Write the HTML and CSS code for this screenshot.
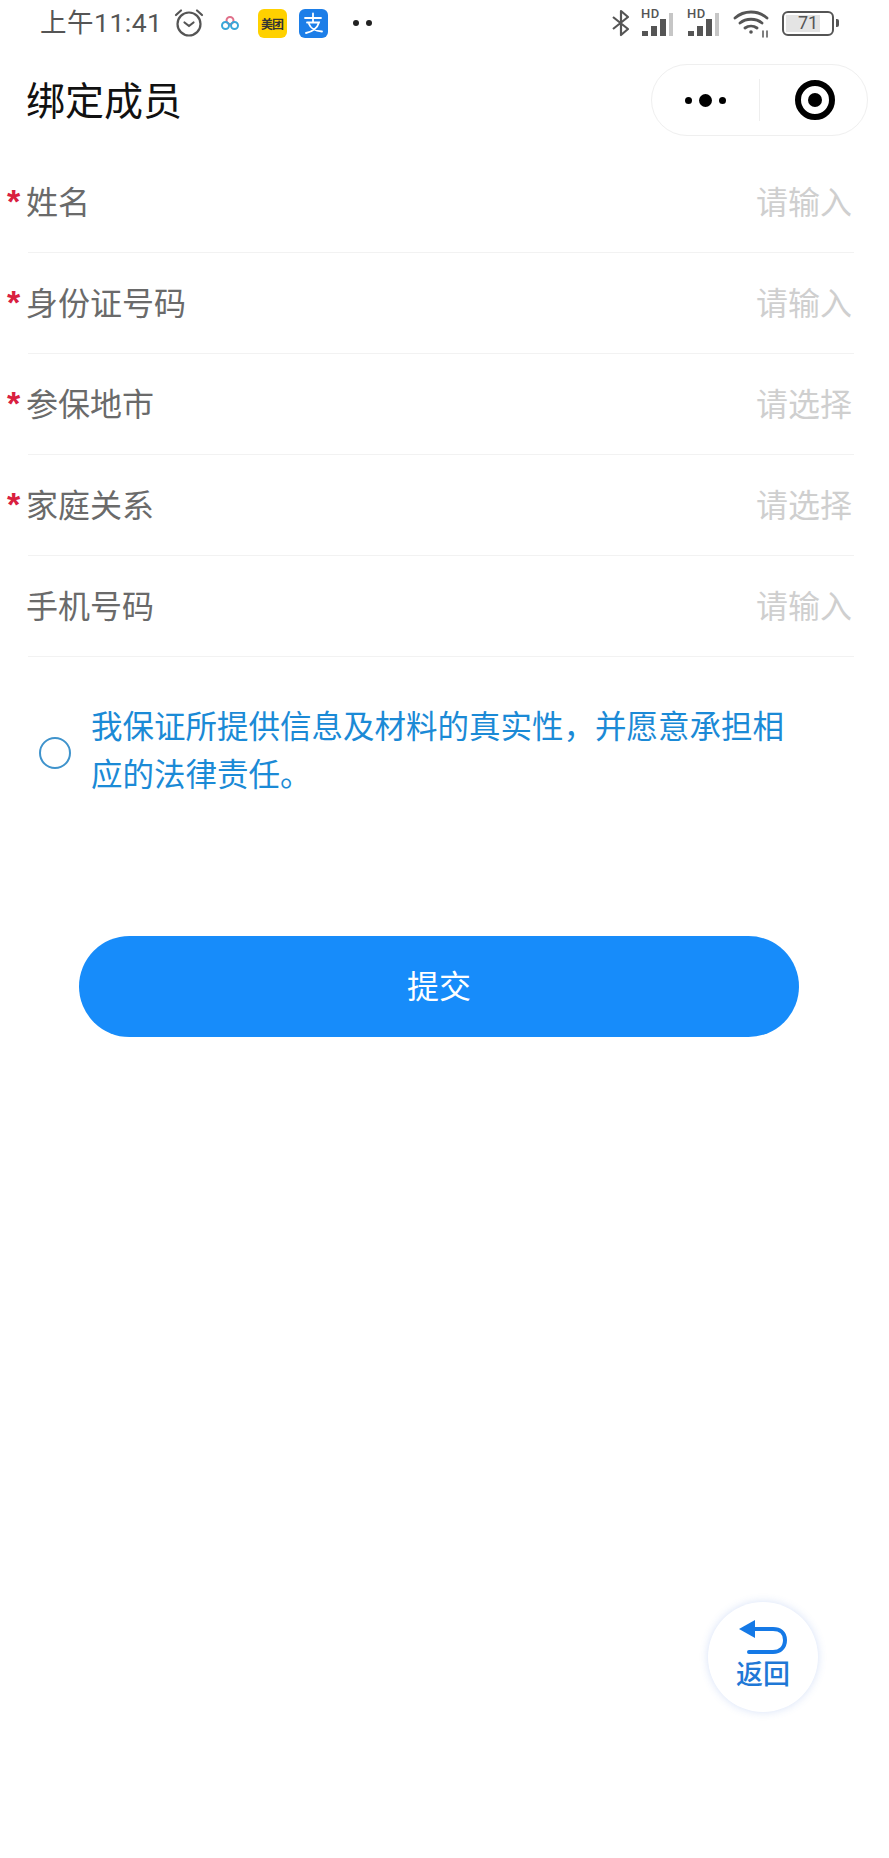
FILE: index.html
```html
<!DOCTYPE html>
<html lang="zh-CN">
<head>
<meta charset="utf-8">
<title>绑定成员</title>
<link rel="stylesheet" href="styles.css">
</head>
<body>
<div class="page">
  <div class="statusbar">
    <div class="status-left">
      <span class="time">上午11:41</span>
      <svg class="ic-alarm" width="30" height="30" viewBox="0 0 30 30" fill="none" stroke="#555" stroke-width="2.2" stroke-linecap="round" stroke-linejoin="round"><circle cx="15" cy="16" r="11.500"/><path d="M10.500 14.500l4.500 3.500 4.500-3.500"/><path d="M2 7l5-4.500M28 7l-5-4.500"/></svg>
      <svg class="ic-cloud" width="20" height="16" viewBox="0 0 20 16" fill="none" stroke-width="2"><circle cx="10" cy="5.500" r="3.500" stroke="#e0708a"/><circle cx="5.500" cy="10.500" r="3.500" stroke="#3aa6d8"/><circle cx="14.500" cy="10.500" r="3.500" stroke="#3aa6d8"/></svg>
      <span class="ic-meituan">美团</span>
      <svg class="ic-alipay" width="29" height="29" viewBox="0 0 29 29"><rect width="29" height="29" rx="6" fill="#1c7ee8"/><path d="M6 9h16M14 4.500v8M8 13.500h12c-1.500 5-6 9-13 10.500M10 15c1.500 4 6 7 13 7.500" fill="none" stroke="#fff" stroke-width="1.800" stroke-linecap="round"/></svg>
      <span class="dots2"><i></i><i></i></span>
    </div>
    <div class="status-right">
      <svg width="20" height="30" viewBox="0 0 20 30" fill="none" stroke="#555" stroke-width="2.200" stroke-linejoin="round"><path d="M2 9l15 12-7 6V3l7 6L2 21"/></svg>
      <span class="signal"><b class="hd">HD</b><i class="b1"></i><i class="b2"></i><i class="b3"></i><i class="b4 off"></i></span>
      <span class="signal"><b class="hd">HD</b><i class="b1"></i><i class="b2"></i><i class="b3"></i><i class="b4 off"></i></span>
      <svg class="ic-wifi" width="38" height="30" viewBox="0 0 38 30" fill="none" stroke="#555" stroke-width="2.800" stroke-linecap="round"><path d="M2 10c9-8 23-8 32 0M7 15c6-5 16-5 22 0M12 20c3.500-2.500 8.500-2.500 12 0"/><circle cx="18" cy="24" r="1.800" fill="#555" stroke="none"/><path d="M30 23v6M34 23v6" stroke-width="1.500"/></svg>
      <span class="battery"><span class="battery-body"><span class="battery-fill"></span><span class="battery-num">71</span></span><i class="battery-cap"></i></span>
    </div>
  </div>

  <div class="navbar">
    <h1 class="nav-title">绑定成员</h1>
    <div class="capsule">
      <span class="capsule-more"><i></i><i class="big"></i><i></i></span>
      <span class="capsule-sep"></span>
      <span class="capsule-target"><i></i></span>
    </div>
  </div>

  <form class="form">
    <div class="row"><span class="label req">姓名</span><span class="ph">请输入</span></div>
    <div class="row"><span class="label req">身份证号码</span><span class="ph">请输入</span></div>
    <div class="row"><span class="label req">参保地市</span><span class="ph">请选择</span></div>
    <div class="row"><span class="label req">家庭关系</span><span class="ph">请选择</span></div>
    <div class="row"><span class="label">手机号码</span><span class="ph">请输入</span></div>
  </form>

  <div class="agree">
    <span class="radio"></span>
    <p class="agree-text">我保证所提供信息及材料的真实性，并愿意承担相应的法律责任。</p>
  </div>

  <button class="submit" type="button">提交</button>

  <div class="back">
    <svg width="48" height="36" viewBox="0 0 48 36" fill="none"><path d="M0 10L16 1v18z" fill="#1579e6"/><path d="M14 10h20c7 0 12 3.500 12 11s-5 12-12 12H10" stroke="#1579e6" stroke-width="4" stroke-linecap="round"/></svg>
    <span class="back-text">返回</span>
  </div>
</div>
</body>
</html>
```
FILE: styles.css
```css
* { box-sizing: border-box; }
html, body { margin: 0; padding: 0; background: #fff; }
body { font-family: "Noto Sans CJK SC", "Noto Sans", sans-serif; }
.page { position: relative; width: 889px; height: 1858px; overflow: hidden; background: #fff; }

.statusbar { height: 46px; display: flex; justify-content: space-between; align-items: center; padding: 0 50px 0 40px; }
.status-left, .status-right { display: flex; align-items: center; }
.time { font-family: "Roboto", "Noto Sans CJK SC", sans-serif; font-size: 26.500px; color: #555; line-height: 46px; letter-spacing: 0.5px; }
.ic-alarm { margin-left: 11px; }
.ic-cloud { margin-left: 16px; }
.ic-meituan { margin-left: 18px; width: 29px; height: 29px; border-radius: 6px; background: #ffd100; color: #333; font-size: 12px; font-weight: 700; line-height: 29px; text-align: center; white-space: nowrap; letter-spacing: -1px; }
.ic-alipay { margin-left: 12px; }
.dots2 { display: flex; gap: 7px; margin-left: 25px; }
.dots2 i { width: 6px; height: 6px; border-radius: 50%; background: #222; }

.status-right svg { display: block; }
.signal { position: relative; display: flex; align-items: flex-end; gap: 3px; width: 34px; height: 26px; margin-left: 10px; padding-left: 1px; }
.signal + .signal { margin-left: 12px; }
.signal i { display: block; width: 6px; background: #555; }
.signal .b1 { height: 5px; }
.signal .b2 { height: 10px; }
.signal .b3 { height: 17px; }
.signal .b4 { width: 4px; height: 23px; }
.signal .off { background: #c6c6c6; }
.signal .hd { position: absolute; left: 0; top: -3px; font-family: "Roboto", sans-serif; font-size: 13px; line-height: 14px; font-weight: 500; letter-spacing: 0.5px; color: #555; }
.ic-wifi { margin-left: 12px; }
.battery { display: flex; align-items: center; margin-left: 11px; }
.battery-body { position: relative; width: 52px; height: 25px; border: 2.500px solid #555; border-radius: 6px; overflow: hidden; }
.battery-fill { position: absolute; left: 2px; top: 2px; bottom: 2px; width: 71%; background: #e4e4e4; }
.battery-num { position: absolute; left: 0; right: 0; top: 0; text-align: center; font-family: "Roboto", sans-serif; font-size: 18px; line-height: 20px; color: #555; }
.battery-cap { width: 3px; height: 8px; margin-left: 2px; background: #555; border-radius: 0 2px 2px 0; }

.navbar { position: relative; height: 108px; display: flex; align-items: center; justify-content: space-between; padding: 0 21px 0 26px; }
.nav-title { margin: 0 0 4px; font-size: 39px; font-weight: 400; line-height: 48px; color: #111; }
.capsule { width: 217px; height: 72px; border: 1px solid #efefef; border-radius: 36px; display: flex; align-items: center; background: #fff; }
.capsule-more { width: 107px; display: flex; align-items: center; justify-content: center; gap: 7px; }
.capsule-more i { width: 7px; height: 7px; border-radius: 50%; background: #000; }
.capsule-more i.big { width: 13px; height: 13px; }
.capsule-sep { width: 1px; height: 42px; background: #eee; }
.capsule-target { flex: 1; display: flex; align-items: center; justify-content: center; padding-left: 2px; }
.capsule-target i { width: 40px; height: 40px; border-radius: 50%; border: 6px solid #000; position: relative; display: block; }
.capsule-target i::after { content: ""; position: absolute; left: 7px; top: 7px; width: 14px; height: 14px; border-radius: 50%; background: #000; }

.form { padding: 0 35px 0 28px; margin-top: -2px; }
.row { height: 101px; display: flex; justify-content: space-between; align-items: center; padding-bottom: 5px; border-bottom: 1px solid #f2f2f2; }
.label { position: relative; margin-left: -2px; font-size: 32px; line-height: 40px; color: #6a6a6a; }
.label.req::before { content: "*"; position: absolute; left: -19px; top: 1px; color: #d9203f; font-size: 34px; font-weight: 700; line-height: 40px; font-family: "Liberation Sans", sans-serif; }
.ph { margin-right: 2px; font-size: 32px; line-height: 40px; color: #cfcfcf; }

.agree { display: flex; align-items: center; margin-top: 44px; padding: 0 90px 0 39px; }
.radio { flex: none; width: 32px; height: 32px; margin-top: 8px; border: 2px solid #3f93cc; border-radius: 50%; margin-right: 20px; }
.agree-text { margin: 0; font-size: 31.500px; line-height: 47.500px; color: #1b8ad6; }

.submit { display: block; width: 720px; height: 101px; margin: 140px 0 0 79px; padding: 0 0 6px; border: 0; border-radius: 51px; background: #178cfa; color: #fff; font: inherit; font-size: 32px; }

.back { position: absolute; left: 708px; top: 1602px; width: 110px; height: 110px; border-radius: 50%; background: #fff; box-shadow: 0 0 8px rgba(70, 120, 220, 0.22); display: flex; flex-direction: column; align-items: center; padding-top: 17px; }
.back svg { display: block; }
.back-text { font-size: 27px; line-height: 30px; font-weight: 500; color: #1f78d6; margin-top: 3px; }
```
